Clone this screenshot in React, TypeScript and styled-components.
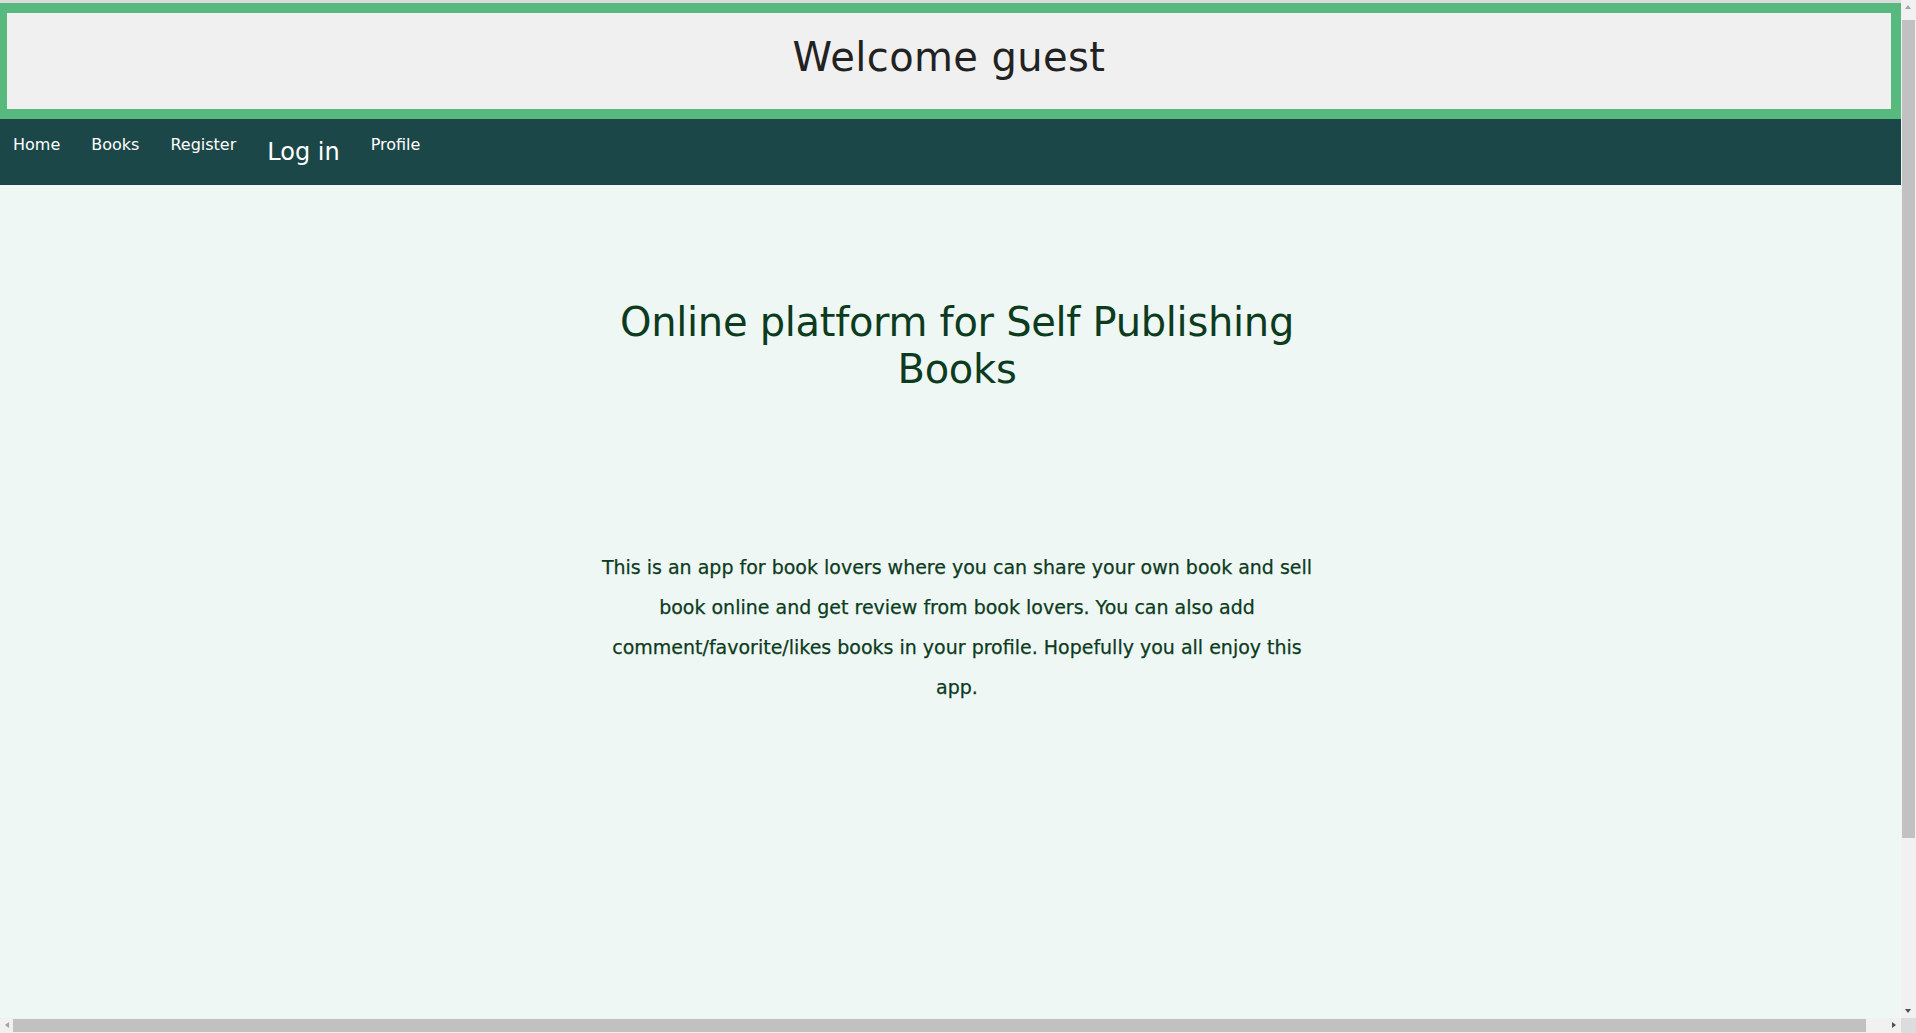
import React from "react";
import styled, { createGlobalStyle } from "styled-components";

const GlobalStyle = createGlobalStyle`
  html, body {
    margin: 0;
    padding: 0;
  }
  body {
    background: #dcdcdc;
    font-family: "DejaVu Sans", "Liberation Sans", sans-serif;
  }
  * { box-sizing: border-box; }
`;

const Page = styled.div`
  padding-top: 3px;
  width: 1920px;
`;

const Header = styled.header`
  margin-left: -3px;
  width: 1904px;
  height: 116px;
  border: 10px solid #57b97d;
  background: #f0f0f0;
  display: flex;
  align-items: center;
  justify-content: center;
`;

const Welcome = styled.h1`
  margin: 0 0 8px 0;
  font-weight: 400;
  font-size: 40px;
  color: #222222;
  letter-spacing: 0.4px;
`;

const Nav = styled.nav`
  width: 1901px;
  height: 66px;
  background: #1c4748;
  display: flex;
  align-items: flex-start;
  padding: 12px 0 0 13px;
  gap: 31px;
`;

const NavLink = styled.a<{ $big?: boolean }>`
  color: #ffffff;
  text-decoration: none;
  font-size: ${(p) => (p.$big ? "24px" : "16px")};
  line-height: ${(p) => (p.$big ? "42px" : "28px")};
  cursor: pointer;
`;

const Main = styled.main`
  width: 1920px;
  min-height: 1043px;
  padding: 114px 6px 0 0;
  background: #eef7f3;
  display: flex;
  flex-direction: column;
  align-items: center;
`;

const Content = styled.section`
  width: 730px;
  display: flex;
  flex-direction: column;
  align-items: center;
  text-align: center;
`;

const Title = styled.h2`
  margin: 0;
  font-weight: 400;
  font-size: 40px;
  line-height: 47px;
  color: #0d3b1e;
  letter-spacing: -0.3px;
`;

const Description = styled.p`
  margin: 154px 0 0 0;
  font-size: 19px;
  line-height: 40px;
  color: #0d3b1e;
  width: 716px;
  -webkit-text-stroke: 0.25px #0d3b1e;
`;

/* Browser-style scrollbars drawn over the page edges */
const VScroll = styled.div`
  position: fixed;
  top: 0;
  right: 0;
  width: 15px;
  height: 1018px;
  background: #f1f1f1;
`;

const VThumb = styled.div`
  position: absolute;
  left: 1px;
  top: 20px;
  width: 13px;
  height: 818px;
  background: #c1c1c1;
`;

const HScroll = styled.div`
  position: fixed;
  left: 0;
  bottom: 0;
  width: 1901px;
  height: 15px;
  background: #f1f1f1;
`;

const HThumb = styled.div`
  position: absolute;
  left: 13px;
  top: 1px;
  width: 1853px;
  height: 13px;
  background: #c1c1c1;
`;

const Corner = styled.div`
  position: fixed;
  right: 0;
  bottom: 0;
  width: 15px;
  height: 15px;
  background: #dcdcdc;
`;

const Arrow = styled.div<{ $dir: "up" | "down" | "left" | "right"; $dim?: boolean }>`
  position: absolute;
  width: 0;
  height: 0;
  ${(p) => {
    const c = p.$dim ? "#a3a3a3" : "#505050";
    switch (p.$dir) {
      case "up":
        return `top: 5px; left: 4px; border-left: 3.5px solid transparent; border-right: 3.5px solid transparent; border-bottom: 4px solid ${c};`;
      case "down":
        return `bottom: 5px; left: 4px; border-left: 3.5px solid transparent; border-right: 3.5px solid transparent; border-top: 4px solid ${c};`;
      case "left":
        return `left: 5px; top: 4px; border-top: 3.5px solid transparent; border-bottom: 3.5px solid transparent; border-right: 4px solid ${c};`;
      case "right":
        return `right: 5px; top: 4px; border-top: 3.5px solid transparent; border-bottom: 3.5px solid transparent; border-left: 4px solid ${c};`;
    }
  }}
`;

export default function App() {
  return (
    <>
      <GlobalStyle />
      <Page>
        <Header>
          <Welcome>Welcome guest</Welcome>
        </Header>
        <Nav>
          <NavLink>Home</NavLink>
          <NavLink>Books</NavLink>
          <NavLink>Register</NavLink>
          <NavLink $big>Log in</NavLink>
          <NavLink>Profile</NavLink>
        </Nav>
        <Main>
          <Content>
            <Title>Online platform for Self Publishing Books</Title>
            <Description>
              This is an app for book lovers where you can share your own book and sell book online and get
              review from book lovers. You can also add comment/favorite/likes books in your profile. Hopefully
              you all enjoy this app.
            </Description>
          </Content>
        </Main>
      </Page>
      <VScroll>
        <Arrow $dir="up" $dim />
        <VThumb />
        <Arrow $dir="down" />
      </VScroll>
      <HScroll>
        <Arrow $dir="left" $dim />
        <HThumb />
        <Arrow $dir="right" />
      </HScroll>
      <Corner />
    </>
  );
}
